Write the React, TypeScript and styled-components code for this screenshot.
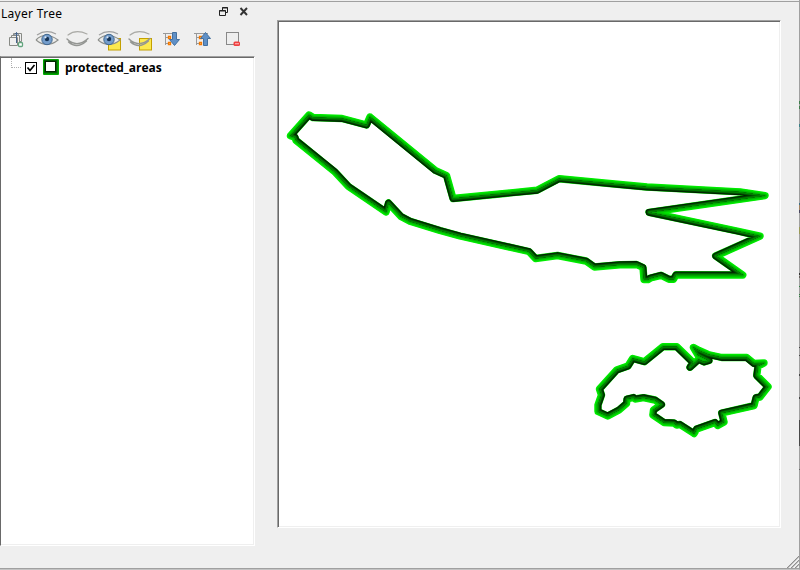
import React from "react";
import styled, { createGlobalStyle } from "styled-components";

const GlobalStyle = createGlobalStyle`
  * { box-sizing: border-box; }
  body { margin: 0; background: #f0f0f0; }
`;

const Window = styled.div`
  display: flex;
  width: 800px;
  height: 570px;
  background: #efefef;
  border-right: 1px solid #a0a0a0;
  border-bottom: 1px solid #c3c3c3;
  box-shadow: inset 0 -1px #a0a0a0;
  font-family: "Open Sans", "Noto Sans", sans-serif;
  overflow: hidden;
  position: relative;
`;
const TopEdge = styled.div`
  position: absolute;
  inset: 1px 0 auto 0;
  height: 1px;
  background: #a0a0a0;
`;
const EdgeMark = styled.span<{ $top: number; $size: number; $color: string }>`
  position: absolute;
  right: 0;
  width: 1px;
  top: ${(p) => p.$top}px;
  height: ${(p) => p.$size}px;
  background: ${(p) => p.$color};
`;
const Frame = styled.div`
  position: relative;
  width: 800px;
  height: 570px;
  overflow: hidden;
`;
const Dock = styled.aside`
  width: 255px;
  height: 546px;
  display: flex;
  flex-direction: column;
`;
const TitleBar = styled.header`
  height: 26px;
  padding: 2px 6px 0 1px;
  display: flex;
  align-items: center;
`;
const Title = styled.span`
  flex: 1;
  font: 12px/20px "Noto Sans", sans-serif;
  letter-spacing: 0.3px;
  color: #000;
`;
const DockButtons = styled.div`
  display: flex;
  gap: 10px;
  height: 20px;
  margin-top: -5px;
`;
const Toolbar = styled.div`
  height: 30px;
  padding: 3px 0 0 4px;
  display: flex;
  gap: 7px;
`;
const Icon = styled.svg`
  width: 24px;
  height: 22px;
  display: block;
  overflow: visible;
`;
const SmallIcon = styled.svg`
  width: 10px;
  height: 20px;
  display: block;
`;
const Sunken = styled.div`
  background: #fff;
  border: 1px solid;
  border-color: #a0a0a0 #fff #fff #a0a0a0;
  box-shadow: inset 1px 1px #696969, inset -1px -1px #efefef;
`;
const Tree = styled(Sunken)`
  height: 490px;
  padding: 1px 2px;
  border-left-color: #696969;
  box-shadow: inset 0 1px #696969, inset -1px -1px #efefef;
`;
const Row = styled.div`
  display: flex;
  align-items: center;
  height: 18px;
  padding-left: 7px;
`;
const Branch = styled.span`
  width: 10px;
  height: 10px;
  margin: -9px 4px 0 1px;
  border-left: 1px dotted #b0b0b0;
  border-bottom: 1px dotted #b0b0b0;
`;
const Check = styled.svg`
  width: 12px;
  height: 12px;
  margin: 1px 6px 0 0;
`;
const Swatch = styled.svg`
  width: 16px;
  height: 16px;
  margin: 0 6px 0 0;
`;
const LayerName = styled.span`
  font: bold 12px/17px "Open Sans", sans-serif;
  color: #000;
  white-space: nowrap;
`;
const Canvas = styled(Sunken)`
  width: 504px;
  height: 508px;
  margin: 20px 0 0 22px;
`;
const MapView = styled.svg`
  display: block;
  width: 502px;
  height: 506px;
`;
const Grip = styled.svg`
  position: absolute;
  right: 0;
  bottom: 1px;
  width: 13px;
  height: 13px;
`;

const northArea =
  "309,115 313,117.5 342,118.5 366.5,125 370,117 435.5,170.5 446.5,175.5 453,198.5 537,190.3 559,178.7 620,184.5 647,187 740,191.9 765,195.7 649,212.3 737,231 760,236.2 715.7,256 742.7,275 676,274.8 673.5,279.3 669,279.3 661,275.3 650.5,278 648,279.5 644,279.5 643,267.5 636.5,264.5 620,264.7 600,266.5 594.5,267 586,261 557.5,255.5 535.5,258.5 529,251.5 460,236 440,230.5 410,221.3 401,216.5 388.5,203 386,212 348.5,186.5 335,172 296,140.3 295,137.3 290.5,135.7";
const southArea =
  "663,346.7 676.7,346.7 693,362.5 690,367.3 698.5,359.5 704,362 709,360.500 698,355 693.5,347.5 699,350.5 708,354.5 721.7,357.5 746.7,357.5 754,363.5 764,363 758,366 756.7,375.5 768,386.7 760,397 756,397.7 754,405.7 721.7,413 724,422 717.7,425.5 715,422.5 696.7,429 694,433.5 680,424.5 676.7,425 674,423 664,422.5 652.9,415 653.5,410 661.5,404.5 655,400 643.5,397.7 635,399 633.5,397.5 627,399 626.5,403.5 619,410 607.7,416 598,411.5 598,405 601.5,395 599.5,389 616.7,370 628,366 632.7,358.5 644.5,361.7";

const outerBands: [number, string][] = [
  [7.4, "#00f000"], [6.2, "#00e600"], [5, "#00d800"], [3.8, "#00c400"], [2.6, "#00b200"], [1.3, "#00a000"],
];
const innerBands: [number, string][] = [
  [6.8, "#001c00"], [5.4, "#003000"], [4.2, "#004c00"], [3.1, "#006600"], [2, "#007e00"], [1, "#009200"],
];

/* Boundary shaded by distance: bright outside the polygon, dark inside. */
function ShadedArea({ id, points }: { id: string; points: string }) {
  return (
    <g fill="none" strokeLinejoin="round">
      <clipPath id={id}><polygon points={points} /></clipPath>
      {outerBands.map(([w, c]) => <polygon key={w} points={points} stroke={c} strokeWidth={w} />)}
      <g clipPath={`url(#${id})`}>
        {innerBands.map(([w, c]) => <polygon key={w} points={points} stroke={c} strokeWidth={w} />)}
      </g>
    </g>
  );
}

const edgeMarks: [number, number, string][] = [
  [101, 3, "#3f7d4c"], [106, 3, "#3f7d4c"], [124, 3, "#3a7f86"], [128, 2, "#7fa8a8"],
  [203, 2, "#3f6f86"], [205, 5, "#a08060"], [210, 3, "#4a4860"], [227, 7, "#9a9a58"],
  [273, 2, "#333"], [276, 2, "#66605a"], [286, 1, "#2f8040"], [294, 1, "#2f8040"], [296, 1, "#2f8040"],
  [347, 1, "#444"], [355, 1, "#444"], [374, 2, "#444"], [397, 2, "#444"], [420, 26, "#484848"], [469, 1, "#666"],
];

function Lid() {
  return (
    <g fill="none" strokeLinecap="round">
      <path d="M2 6Q10 0 21 5" stroke="#aaaaa6" strokeWidth="1.2" />
      <path d="M1 10Q11 19.500 22 9.500M2.500 13Q11 20.500 20.500 12" stroke="#949693" strokeWidth="1.4" />
    </g>
  );
}
function Eye() {
  return (
    <g>
      <path d="M1 11Q10 1.500 23 11Q12 20 1 11" fill="#ececea" stroke="#8d8f8c" strokeWidth="1.2" />
      <path d="M2 6Q11 0 21 5" fill="none" stroke="#a0a0a0" strokeWidth="1.2" />
      <circle cx="12" cy="10.5" r="5.2" fill="#739ccb" stroke="#42688f" />
      <circle cx="12" cy="10" r="2.2" fill="#173456" />
      <circle cx="10.5" cy="8.3" r="1.1" fill="#dce9f7" />
    </g>
  );
}
function Note() {
  return <rect x="11.5" y="9.5" width="12" height="11.5" fill="#fce94f" stroke="#c4a000" />;
}
function TreeArrow({ up }: { up?: boolean }) {
  return (
    <Icon viewBox="0 0 24 22">
      <path d="M4 4.500h14M6.500 4v12M7 8.500h3M7 14.500h3" fill="none" stroke="#999" />
      <path d="M9.500 7.500h2v2h-2zM9.500 13.500h2v2h-2z" fill="#fff0cf" stroke="#f57900" strokeWidth="1.300" />
      <path
        d={up ? "M13.500 16.500v-7h-3L15.500 3.500l5 6h-3v7z" : "M13.500 3.500h4v7h3L15.500 16.500 10.500 10.500h3z"}
        fill="#6090c6"
        stroke="#44709f"
      />
    </Icon>
  );
}

export default function App() {
  return (
    <Frame>
      <GlobalStyle />
      <Window>
        <TopEdge />
        <Dock>
          <TitleBar>
            <Title>Layer Tree</Title>
            <DockButtons>
              <SmallIcon viewBox="0 0 10 20">
                <path d="M3.500 8V5.500h5v5H7M3 6h6M.500 8.500h6v5h-6zM0 9h7" fill="none" stroke="#222" />
              </SmallIcon>
              <SmallIcon viewBox="0 0 10 20">
                <path d="M1.500 6L8 13M8 6L1.500 13" fill="none" stroke="#333" strokeWidth="1.900" />
              </SmallIcon>
            </DockButtons>
          </TitleBar>
          <Toolbar>
            <Icon viewBox="0 0 24 22">
              <path d="M5.500 8.500h8v8h-8zM7.500 8V6.500h8v8H14M9.500 6V4.500h8v8H16" fill="none" stroke="#888a85" />
              <path d="M12.500 14V3.500M10.500 6l2-2.500 2 2.500" fill="none" stroke="#46648a" />
              <rect x="14.500" y="13.500" width="4" height="4" rx="1" fill="#fff" stroke="#62a57e" strokeWidth="1.300" />
            </Icon>
            <Icon viewBox="0 0 24 22"><Eye /></Icon>
            <Icon viewBox="0 0 24 22"><Lid /></Icon>
            <Icon viewBox="0 0 24 22"><Note /><Eye /></Icon>
            <Icon viewBox="0 0 24 22"><Note /><Lid /></Icon>
            <TreeArrow />
            <TreeArrow up />
            <Icon viewBox="0 0 24 22">
              <rect x="5.500" y="3.500" width="12" height="12" fill="#eee" stroke="#888" />
              <rect x="12.500" y="12.500" width="6.500" height="4.500" rx="1.500" fill="#ef4040" />
              <path d="M14 14.750h4" stroke="#ffc0c0" />
            </Icon>
          </Toolbar>
          <Tree>
            <Row>
              <Branch />
              <Check viewBox="0 0 12 12">
                <rect x=".5" y=".5" width="11" height="11" fill="#fff" stroke="#000" />
                <path d="M2.500 5.500L5 8.500L9.500 3" fill="none" stroke="#000" strokeWidth="1.700" />
              </Check>
              <Swatch viewBox="0 0 16 16">
                <rect width="16" height="16" rx="1" fill="#00a800" />
                <rect x="1" y="1" width="14" height="14" fill="#008800" />
                <rect x="1" y="1" width="13" height="13" fill="#005a00" />
                <rect x="2" y="2" width="11" height="11" fill="#002500" />
                <rect x="3" y="3" width="9" height="9" fill="#fff" />
              </Swatch>
              <LayerName>protected_areas</LayerName>
            </Row>
          </Tree>
        </Dock>
        <Canvas>
          <MapView viewBox="278 21 502 506">
            <ShadedArea id="north-inside" points={northArea} />
            <ShadedArea id="south-inside" points={southArea} />
          </MapView>
        </Canvas>
        <Grip viewBox="0 0 13 13">
          <path d="M1 13L13 1M5 13L13 5M9 13L13 9" stroke="#909090" strokeWidth="1.500" />
          <path d="M0 13L13 0M4 13L13 4M8 13L13 8" stroke="#fff" strokeWidth=".7" />
        </Grip>
      </Window>
      {edgeMarks.map(([top, size, color]) => (
        <EdgeMark key={top} $top={top} $size={size} $color={color} />
      ))}
    </Frame>
  );
}
